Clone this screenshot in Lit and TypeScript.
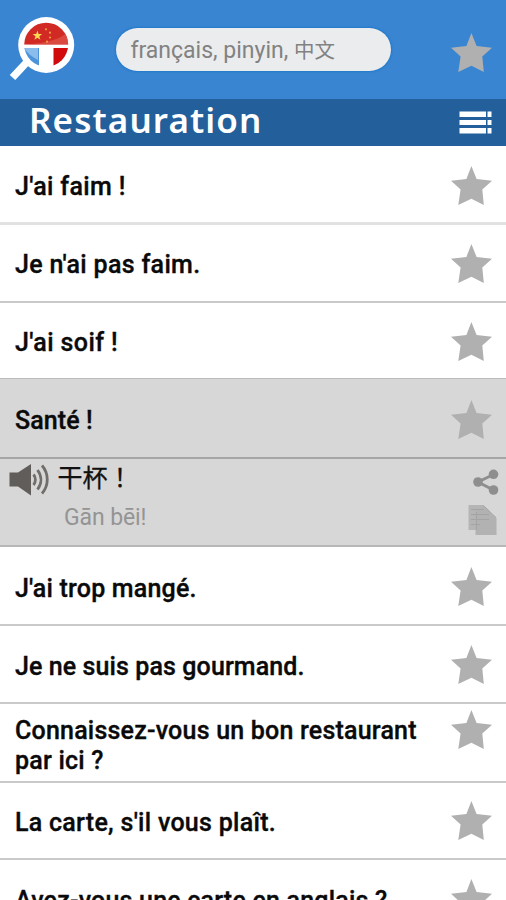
import { LitElement, html, css, svg } from "lit";
import { customElement, property } from "lit/decorators.js";
import { classMap } from "lit/directives/class-map.js";

@customElement("star-icon")
class StarIcon extends LitElement {
  static styles = css`
    :host { display: block; width: 41px; height: 39px; flex: none; }
    svg { display: block; }
  `;
  render() {
    return html`<svg width="41" height="39" viewBox="0 0 41 39">
      <path fill="#b0b0b0" d="M20.4 0L25.6 12.9L41 14.7L31.3 23.6L32.8 39L20.4 32.8L7.3 39L9.6 23.6L0 14.7L15.4 12.9Z" />
    </svg>`;
  }
}

@customElement("phrase-row")
class PhraseRow extends LitElement {
  @property() text = "";
  @property() tone = "plain";
  @property({ type: Number }) tracking = 0;
  static styles = css`
    :host { display: block; }
    .row {
      box-sizing: border-box; height: 78px; display: flex; align-items: flex-start;
      justify-content: space-between; padding: 19px 14.5px 0 15px;
      border-bottom: 2px solid #c9c9c9; background: #fff;
    }
    .label {
      font: 500 25px/30px Roboto, "Noto Sans", sans-serif; color: #0a0a0a;
      -webkit-text-stroke: 0.35px #0a0a0a; padding-top: 6px; white-space: pre;
    }
    .first { height: 79px; padding-top: 20px; border-bottom: 3px solid #e2e2e2; }
    .before { height: 76px; border-bottom: 1px solid #bcbcbc; }
    .selected { background: #d7d7d7; height: 80px; padding-top: 21px; border-bottom-color: #a6a6a6; }
    .after { height: 79px; padding-top: 20px; }
    .double { height: 79px; padding-top: 6px; }
    .short { height: 77px; padding-top: 18px; }
    .after .label, .lower .label, .short .label { padding-top: 7px; }
  `;
  render() {
    return html`<div class=${classMap({ row: true, [this.tone]: true })}>
      <div class="label" style="letter-spacing:${this.tracking}px">${this.text}</div>
      <star-icon></star-icon>
    </div>`;
  }
}

const logo = svg`
  <path d="M27 62L12.5 77.5" stroke="#fff" stroke-width="7.5" />
  <circle cx="46.2" cy="45" r="28" fill="#fff" />
  <clipPath id="lens"><circle cx="46.2" cy="44.7" r="22" /></clipPath>
  <g clip-path="url(#lens)">
    <rect x="24" y="22" width="46" height="22.5" fill="#d12a24" />
    <path d="M24 44.5C46 44 61 39 69 31V44.5Z" fill="#e0594e" opacity=".7" />
    <rect x="24" y="48" width="15" height="22" fill="#4c93da" />
    <path d="M24 48H38V60C32 57 27 53 24 48Z" fill="#8bbdec" />
    <rect x="53.5" y="48" width="17" height="22" fill="#d10a0c" />
  </g>
  <path d="M37.4 30.5L38.6 34L42.2 34.1L39.3 36.2L40.4 39.8L37.4 37.7L34.4 39.8L35.5 36.2L32.6 34.1L36.2 34Z" fill="#ffd94f" />
  <g fill="#f09a40"><circle cx="46" cy="29.3" r="1.1" /><circle cx="50" cy="32.7" r="1.1" /><circle cx="50" cy="37.5" r="1.1" /><circle cx="47" cy="41.7" r="1.1" /></g>
`;

const before = [
  { tone: "first", text: "J'ai faim !", tracking: 0.35 },
  { tone: "plain", text: "Je n'ai pas faim.", tracking: 0.33 },
  { tone: "before", text: "J'ai soif !", tracking: 0.4 },
  { tone: "selected", text: "Santé !", tracking: 0.1 },
];
const after = [
  { tone: "after", text: "J'ai trop mangé.", tracking: 0.2 },
  { tone: "lower", text: "Je ne suis pas gourmand.", tracking: 0.1 },
  { tone: "double", text: "Connaissez-vous un bon restaurant\npar ici ?", tracking: 0.21 },
  { tone: "short", text: "La carte, s'il vous plaît.", tracking: 0.28 },
  { tone: "lower", text: "Avez-vous une carte en anglais ?", tracking: 0.2 },
];
const row = (r: { tone: string; text: string; tracking: number }) =>
  html`<phrase-row .tone=${r.tone} .text=${r.text} .tracking=${r.tracking}></phrase-row>`;

@customElement("app-root")
class AppRoot extends LitElement {
  static styles = css`
    :host { display: block; height: 900px; overflow: hidden; background: #fff; font-family: Roboto, "Noto Sans", "Noto Sans CJK SC", sans-serif; }
    svg { display: block; flex: none; }
    .top { height: 98.5px; background: #3985d1; display: flex; align-items: flex-start; }
    .search {
      box-sizing: border-box; width: 275px; height: 43px; margin: 28px 60px 0 26px; border-radius: 22px;
      background: #ebeced; color: #828282; padding-left: 14.5px; white-space: nowrap;
      font-size: 23px; line-height: 45px; box-shadow: 0 0 2px 1px #2279cb;
    }
    .han { font-size: 20.5px; }
    .top star-icon { margin-top: 33px; }
    .title {
      height: 47.5px; background: #225f9b; display: flex; align-items: flex-start;
      justify-content: space-between; padding: 0 14.5px 0 29px;
    }
    h1 { margin: 0; font: 600 35px/41px "Noto Sans", sans-serif; letter-spacing: 1.1px; color: #fff; white-space: nowrap; }
    .menu { margin-top: 12px; }
    .detail {
      box-sizing: border-box; height: 88px; background: #d7d7d7; border-bottom: 2px solid #b7b7b7;
      display: flex; align-items: flex-start; padding-left: 9px;
    }
    .sound { margin-top: 4px; }
    .words { flex: 1; padding-left: 7.5px; }
    .zh { font: 400 25px/35px "Noto Sans CJK TC", sans-serif; color: #111; -webkit-text-stroke: 0.3px #111; }
    .py { font-size: 23px; line-height: 30px; letter-spacing: -0.1px; color: #949494; padding: 9px 0 0 6.5px; }
  `;
  render() {
    return html`
      <header class="top">
        <svg width="90" height="98" viewBox="0 0 90 98">${logo}</svg>
        <div class="search">français, pinyin, <span class="han">中文</span></div>
        <star-icon></star-icon>
      </header>
      <div class="title">
        <h1>Restauration</h1>
        <svg class="menu" width="33" height="24" viewBox="0 0 33 24" fill="#fff">
          <path d="M0.5 0.5H27V6H0.5ZM28.5 0.5H32.5V6H28.5ZM0.5 9H27V14H0.5ZM28.5 9H32.5V14H28.5ZM0.5 17H27V22.5H0.5ZM28.5 17H32.5V22.5H28.5Z" />
        </svg>
      </div>
      ${before.map(row)}
      <section class="detail">
        <svg class="sound" width="41" height="34" viewBox="0 0 41 34">
          <path d="M0.5 9.5H9L22 1V32.5L9 23.5H0.5Z" fill="#615d5b" />
          <path d="M24.5 11.5C27 14.5 27 19 24.5 22M28.5 7C33 13 33 20.5 28.5 26.5M33 2.5C40 10.5 40 22.5 33 30.5" fill="none" stroke="#716d6b" stroke-width="2.8" />
        </svg>
        <div class="words">
          <div class="zh" lang="zh-TW">干杯！</div>
          <div class="py">Gān bēi!</div>
        </div>
        <svg width="40" height="86" viewBox="466 459 40 86">
          <path d="M493.5 474.5L478 482L493.5 490" fill="none" stroke="#8e8e8e" stroke-width="3" />
          <g fill="#8e8e8e"><circle cx="493.5" cy="474.3" r="4.8" /><circle cx="478" cy="482" r="4.8" /><circle cx="493.5" cy="490" r="4.8" /></g>
          <path d="M468.5 505H483L490 511V530H468.5Z" fill="#b5b5b5" />
          <path d="M475.5 510H487L496.5 518V535H475.5Z" fill="#b2b2b2" />
          <path d="M471 509.5H484M471 514.5H489M471 519.5H489M471 524.5H480M483 505.5L496 517.5M476.5 512V530" stroke="#a4a4a4" fill="none" />
        </svg>
      </section>
      ${after.map(row)}
    `;
  }
}
